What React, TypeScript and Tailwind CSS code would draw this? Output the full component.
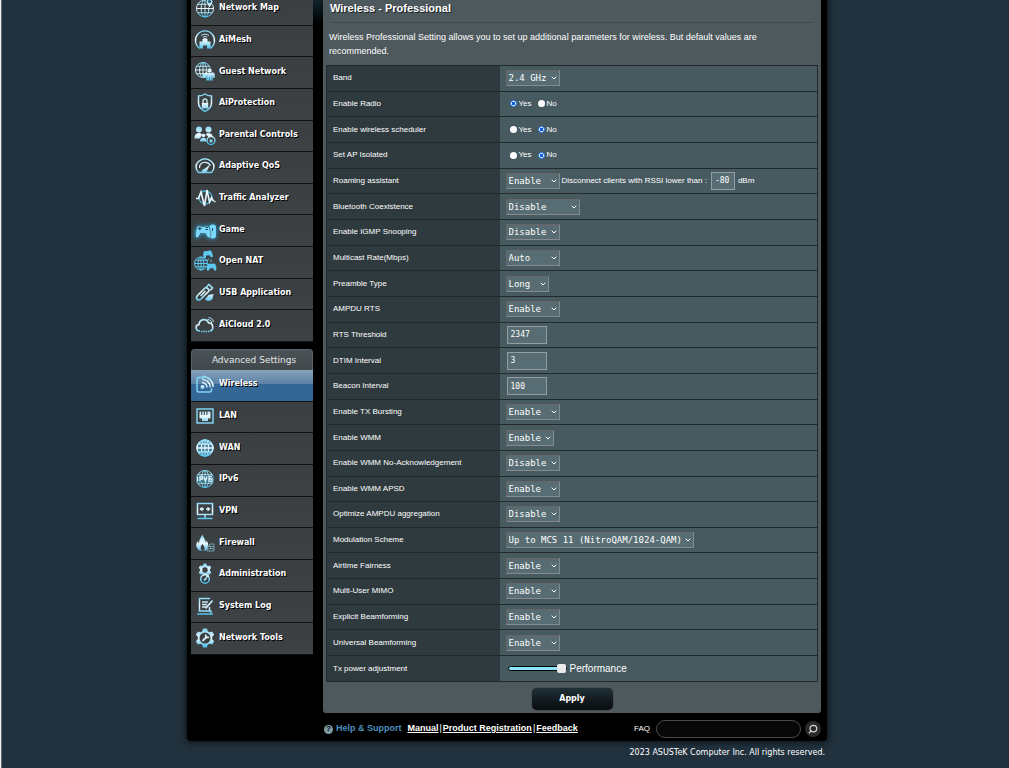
/**
 * WirelessProfessional
 * Router admin page: sidebar menus on the left, the wireless
 * professional settings form on the right, support links below.
 */

import type { ReactNode } from 'react';
import { ChevronDown, Search } from 'lucide-react';
import { clsx } from 'clsx';

type Field =
  | { kind: 'select'; label: string; value: string; width: string }
  | { kind: 'radio'; label: string; value: 'Yes' | 'No' }
  | { kind: 'text'; label: string; value: string }
  | { kind: 'roaming'; label: string }
  | { kind: 'power'; label: string };

const W = { xs: 'w-[43px]', sm: 'w-[48px]', md: 'w-[54px]', lg: 'w-[74px]', xl: 'w-[188px]' };

const fields: Field[] = [
  { kind: 'select', label: 'Band', value: '2.4 GHz', width: W.md },
  { kind: 'radio', label: 'Enable Radio', value: 'Yes' },
  { kind: 'radio', label: 'Enable wireless scheduler', value: 'No' },
  { kind: 'radio', label: 'Set AP Isolated', value: 'No' },
  { kind: 'roaming', label: 'Roaming assistant' },
  { kind: 'select', label: 'Bluetooth Coexistence', value: 'Disable', width: W.lg },
  { kind: 'select', label: 'Enable IGMP Snooping', value: 'Disable', width: W.md },
  { kind: 'select', label: 'Multicast Rate(Mbps)', value: 'Auto', width: W.md },
  { kind: 'select', label: 'Preamble Type', value: 'Long', width: W.xs },
  { kind: 'select', label: 'AMPDU RTS', value: 'Enable', width: W.md },
  { kind: 'text', label: 'RTS Threshold', value: '2347' },
  { kind: 'text', label: 'DTIM Interval', value: '3' },
  { kind: 'text', label: 'Beacon Interval', value: '100' },
  { kind: 'select', label: 'Enable TX Bursting', value: 'Enable', width: W.md },
  { kind: 'select', label: 'Enable WMM', value: 'Enable', width: W.sm },
  { kind: 'select', label: 'Enable WMM No-Acknowledgement', value: 'Disable', width: W.md },
  { kind: 'select', label: 'Enable WMM APSD', value: 'Enable', width: W.md },
  { kind: 'select', label: 'Optimize AMPDU aggregation', value: 'Disable', width: W.md },
  { kind: 'select', label: 'Modulation Scheme', value: 'Up to MCS 11 (NitroQAM/1024-QAM)', width: W.xl },
  { kind: 'select', label: 'Airtime Fairness', value: 'Enable', width: W.md },
  { kind: 'select', label: 'Multi-User MIMO', value: 'Enable', width: W.md },
  { kind: 'select', label: 'Explicit Beamforming', value: 'Enable', width: W.md },
  { kind: 'select', label: 'Universal Beamforming', value: 'Enable', width: W.md },
  { kind: 'power', label: 'Tx power adjustment' },
];

/* Icons, all on a 22 unit grid. "fill" shapes use the same gradient as the strokes. */
const F = 'url(#ice)';

function Globe({ x = 11, y = 11, r = 8 }: { x?: number; y?: number; r?: number }) {
  return (
    <g>
      <circle cx={x} cy={y} r={r} />
      <ellipse cx={x} cy={y} rx={r * 0.45} ry={r} />
      <path d={`M${x} ${y - r}v${r * 2}M${x - r} ${y}h${r * 2}M${x - r * 0.85} ${y - r * 0.5}h${r * 1.7}M${x - r * 0.85} ${y + r * 0.5}h${r * 1.7}`} />
    </g>
  );
}

const pad = 'M3 3.5C4 2 6 2 7 3h4c1-1 3-1 4 .5 1 2 2.500 7 1.500 9.500-.5 2-2.500 1.500-3.500 0L11.500 10h-5L5 13c-1 1.500-3 2-3.500 0C1 10.500 2 5.500 3 3.500z';
const gear = 'M9 1.500h4l.7 2.700 1.800 1 2.700-.8 2 3.400-2 2v2.400l2 2-2 3.400-2.700-.8-1.800 1-.7 2.700H9l-.7-2.700-1.800-1-2.700.8-2-3.400 2-2V9.800l-2-2 2-3.400 2.700.8 1.800-1z';

const icons: Record<string, ReactNode> = {
  map: (
    <>
      <Globe y={11.500} r={8.500} />
      <path d="M15.500 11c-2-3-3.500-4.500-3.500-6.500a3.500 3.500 0 0 1 7 0c0 2-1.500 3.500-3.500 6.500z" fill={F} stroke="#3b3f41" />
      <circle cx="15.500" cy="4.500" r="1.500" fill="#2b5566" stroke="none" />
    </>
  ),
  mesh: (
    <>
      <path d="M6 19.500a9.500 9.500 0 1 1 10 0" strokeWidth="1.400" />
      <path d="M5.500 19.500v-7h3V10l2.500-1 2.500 1v2.500h3v7h-3.500v-3h-4v3z" fill={F} stroke="none" />
      <path d="M7 6.500c2.500-1.800 5.500-1.800 8 0M8.800 8.300c1.400-1 3-1 4.400 0" />
    </>
  ),
  guest: (
    <>
      <Globe x={9} y={9} r={7.500} />
      <circle cx="15.500" cy="9.500" r="2.500" fill={F} stroke="#3b3f41" strokeWidth=".6" />
      <path d="M9 12.500h1.800l1.200-1.500 1.500 1h4l1.500-1 1 1.500h.7V17h-2v2.500h-6.500V17H9z" fill={F} stroke="none" />
      <path d="M12.800 14.500v4M15.500 16v3.500M18 14.500v4" stroke="#3b6576" strokeWidth=".6" />
    </>
  ),
  shield: (
    <>
      <path d="M11 2c2 1.400 4.500 2 6.500 2v7c0 4-2.500 6.500-6.500 8.500C7 17.500 4.500 15 4.500 11V4c2 0 4.500-.6 6.500-2z" strokeWidth="1.500" />
      <path d="M9 11V9a2 2 0 0 1 4 0v2" strokeWidth="1.300" />
      <path d="M7.800 11h6.400v5.500H7.800z" fill={F} stroke="none" />
    </>
  ),
  family: (
    <g fill={F} stroke="none">
      <circle cx="5" cy="5.500" r="3" />
      <circle cx="14.500" cy="5.500" r="3" />
      <path d="M.5 14.500c0-4 2-5.500 4.500-5.500 1.500 0 2.300.5 3 1.500L6 14.500zM11.500 10c1-.8 6-1.500 7 1.500l-3 2.500z" />
      <circle cx="9.500" cy="11.500" r="1.800" />
      <path d="M6 17.500c0-2.500 1.500-3.700 3.500-3.700s3 1.200 3 3.700z" />
      <circle cx="17" cy="16.500" r="4" fill="#3b3f41" stroke={F} strokeWidth="1.300" />
      <path d="M15.500 15.500h3v3h-3z" />
    </g>
  ),
  gauge: (
    <>
      <path d="M4.500 17.500C1 14 1.500 9 4.500 6.500c4-3.500 9-3.500 13 0 3 2.500 3.500 7.500 0 11z" strokeWidth="1.500" />
      <path d="M5.500 13c0-6.500 8-7.500 11-2.500" strokeWidth="1.200" />
      <path d="M7.500 17c0-2 2-3 3.500-3.500l5-4-2.500 5.500c-.5 1-1 2-1 2z" fill={F} stroke="none" />
    </>
  ),
  traffic: (
    <>
      <circle cx="11.500" cy="10.500" r="6.500" stroke="#4fb4dc" strokeWidth="1.300" />
      <path d="M2 11.500h2.500L7 5l3.500 14L13 3l2.500 12 2-4.500 1.500 3h1" stroke="#e9f8ff" strokeWidth="1.600" />
      <path d="M20 14.500h1.500" stroke="#e9f8ff" strokeWidth="1.500" />
    </>
  ),
  game: (
    <g className="drop-shadow-[0_0_2px_#1fa8e8]" fill="#7ad8fb" stroke="none">
      <rect x="15.500" y="5.500" width="6.500" height="14" rx="3" />
      <path d={pad} transform="translate(0 4.500)" stroke="#3b3f41" strokeWidth=".5" />
      <path d="M4 9.500h3.500M5.800 7.800v3.500M11.500 8.500h2.500M11.500 10.500h2.500M18.500 9v3" stroke="#1d4658" strokeWidth="1" />
    </g>
  ),
  nat: (
    <g stroke="#5cc8f0">
      <Globe x={7} y={13.500} r={6.500} />
      <g fill="#5cc8f0" stroke="none">
        <path d={pad} transform="translate(7.500 0) rotate(-8) scale(.62)" />
        <path d={pad} transform="translate(12 12) scale(.62)" />
      </g>
      <path d="M15 8.500l-2 2.500M17 9.500v2.500" />
    </g>
  ),
  usb: (
    <>
      <path d="M3.500 13.500l7.500-7.500c1.500-1.500 5 2 3.500 3.500L7 17c-3 2.500-6-.5-3.500-3.500z" strokeWidth="1.600" />
      <path d="M12.500 5l2.500-2.500L18.500 6 16 8.500M6.500 14l5-5" strokeWidth="1.600" />
      <path d="M11 17.500l3.500-4.500 5-1-1 5c-2 2.500-5.500 2.500-7.500.5z" fill={F} stroke="none" />
    </>
  ),
  cloud: (
    <>
      <path d="M6 17c-5 0-5-6-1-6.500C5.500 4.500 13 4 14.500 9c5-.5 6 8 1 8" strokeWidth="1.600" />
      <path d="M7 17.500h8" strokeDasharray="1.500 .8" strokeWidth="1.600" />
      <path d="M13.500 5.500c2.500 0 4 1.500 4.500 4M14.500 3.500c3 .3 4.500 2 5 4.500" />
    </>
  ),
  wireless: (
    <>
      <path d="M10 4.500H5a2 2 0 0 0-2 2v10.500a2 2 0 0 0 2 2h10.500a2 2 0 0 0 2-2v-2" stroke="#7fd4f3" strokeWidth="1.500" />
      <circle cx="8.500" cy="14" r="2" fill={F} stroke="none" />
      <path d="M8 9.500a5 5 0 0 1 5 5M8 6.300a8 8 0 0 1 8.200 8.200M8.500 3.300a11 11 0 0 1 10.700 10.700" strokeWidth="1.600" />
    </>
  ),
  lan: (
    <>
      <path d="M3 4h16v14H3z" stroke="#7fd4f3" strokeWidth="1.500" />
      <path d="M5.500 6.500h1.700V10h1V6.500h1.600V10h1V6.500h1.600V10h1V6.500H16.500V13.500H14v2.500H8v-2.500H5.500z" fill={F} stroke="none" />
    </>
  ),
  wan: (
    <g strokeWidth="1.300">
      <circle cx="11" cy="11" r="8" fill="#417b90" />
      <Globe />
    </g>
  ),
  ipv6: (
    <>
      <Globe r={8.500} />
      <path d="M2 7.500h18v7H2z" fill="#417b90" stroke="none" />
      <path d="M3.500 8.500v5M6 13.500v-5h2.500v2.500H6M10 8.500l1.500 5 1.500-5M18 8.500h-3v5h3V11h-3" strokeWidth="1.300" />
    </>
  ),
  vpn: (
    <>
      <path d="M3.500 3.500h15v11h-15z" strokeWidth="1.600" />
      <path d="M6 9h4M12 9h4" strokeWidth="1.300" />
      <path d="M8.500 6.500v5L5.500 9zM13.500 6.500v5l3-2.500z" fill={F} stroke="none" />
      <path d="M11 14.500V18M3.500 18.500h15" strokeWidth="1.600" />
    </>
  ),
  firewall: (
    <>
      <path d="M5.500 18.500C1 15.500 2 11 4 9c0 1.500.5 2 1 2.200C5 7.500 7 5 8.500 2.500c.5 3 3.500 5 3 8 .8-.3 1-1.500 1-2 3 4 2 8.500-1 10z" fill={F} stroke="none" />
      <path d="M8 18.500c-2.500-2-1-4.500.5-6.500 1.500 2 3 4 1.500 6.500z" fill="#3b3f41" stroke="none" />
      <path d="M13 14.500v4.500h7v-7h-4.500v2.500zM13 16.700h7M16.500 14.500v2M15.500 14.500H20" stroke="#7aa9b8" strokeWidth=".9" />
    </>
  ),
  admin: (
    <>
      <path d={gear} transform="translate(3.500 -.5) scale(.68)" fill={F} stroke="none" />
      <circle cx="11" cy="7" r="2.700" fill="#3b3f41" stroke="none" />
      <circle cx="11" cy="16" r="4.300" fill="#3b3f41" strokeWidth="1.400" />
      <path d="M10 17.500l2.500-2.500M14.500 11.500l-2 3" strokeWidth="1.800" />
    </>
  ),
  log: (
    <>
      <path d="M5.500 16V3.500H16M15.500 12v5" strokeWidth="1.500" />
      <path d="M4.500 16h12.500v3H4.500M3 19.200h16M8 7h6M8 9.500h5M8 12h4" strokeWidth="1.300" />
      <path d="M18.500 5.500l-7 8" strokeWidth="1.800" />
    </>
  ),
  tools: (
    <>
      <path d={gear} fill={F} stroke="none" />
      <circle cx="11" cy="11" r="5.500" fill="#3b3f41" stroke="none" />
      <path d="M8.500 14l3.500-3.500M12 7.500c-1 1.500 1 3.800 2.800 2.500" strokeWidth="1.800" />
    </>
  ),
};

function MenuItem({ icon, label, active }: { icon: string; label: string; active?: boolean }) {
  return (
    <li className="border-b border-[#101314]">
      <a
        href="#"
        className={clsx(
          'flex h-full items-center gap-[3px] pb-[2px] pl-[3px] text-[8px] font-bold text-white [text-shadow:1px_1px_0_#000]',
          active
            ? 'bg-linear-to-b from-[#86a2bb] from-0% via-[#5d82a6] via-45% to-[#346796] to-45%'
            : 'bg-linear-to-b from-[#3a3e40] to-[#3d4244]',
        )}
      >
        <svg viewBox="0 0 22 22" className="size-[22px] shrink-0 overflow-visible" fill="none" stroke={F} strokeWidth="1">
          {icons[icon]}
        </svg>
        {label}
      </a>
    </li>
  );
}

function Select({ id, value, width }: { id: string; value: string; width: string }) {
  return (
    <span className={clsx('relative inline-flex h-4', width)}>
      <select
        id={id}
        defaultValue={value}
        className="h-4 w-full appearance-none border border-t-[#666] border-r-[#858b8d] border-b-[#858b8d] border-l-[#666] bg-[#576d73] pl-[2px] font-['DejaVu_Sans_Mono',monospace] text-[9px] leading-[14px] text-white"
      >
        <option>{value}</option>
      </select>
      <ChevronDown className="pointer-events-none absolute top-1 right-[2px] size-2 text-white" strokeWidth={3} />
    </span>
  );
}

function TextBox({ id, value, className }: { id: string; value: string; className: string }) {
  return (
    <input
      id={id}
      type="text"
      defaultValue={value}
      className={clsx(
        "h-[18px] border border-[#929ea1] bg-[#576d73] px-[3px] font-['DejaVu_Sans_Mono',monospace] text-[8px] text-white",
        className,
      )}
    />
  );
}

function Control({ field, id }: { field: Field; id: string }) {
  switch (field.kind) {
    case 'select':
      return <Select id={id} value={field.value} width={field.width} />;
    case 'text':
      return <TextBox id={id} value={field.value} className="ml-px w-10" />;
    case 'radio':
      return (
        <span className="flex items-center gap-[6px] pl-1">
          {['Yes', 'No'].map((opt) => (
            <label key={opt} className="flex items-center gap-[2px]">
              <input
                type="radio"
                name={id}
                defaultChecked={opt === field.value}
                className="size-[7px] appearance-none rounded-full bg-white checked:border checked:border-[#0a5fe0] checked:bg-[radial-gradient(circle,#0a5fe0_40%,#fff_50%)]"
              />
              {opt}
            </label>
          ))}
        </span>
      );
    case 'roaming':
      return (
        <span className="flex items-center">
          <Select id={id} value="Enable" width={W.md} />
          <label htmlFor="rssi" className="pr-1 pl-[2px]">Disconnect clients with RSSI lower than :</label>
          <TextBox id="rssi" value="-80" className="w-6" />
          <span className="pl-[3px]">dBm</span>
        </span>
      );
    case 'power':
      return (
        <span className="flex items-center gap-[3px] pl-[2px] text-[10px]">
          <input
            id={id}
            type="range"
            defaultValue={100}
            className="h-[9px] w-[59px] appearance-none bg-transparent [&::-webkit-slider-runnable-track]:h-[5px] [&::-webkit-slider-runnable-track]:rounded-full [&::-webkit-slider-runnable-track]:border [&::-webkit-slider-runnable-track]:border-black [&::-webkit-slider-runnable-track]:bg-[#8ce3fc] [&::-webkit-slider-thumb]:-mt-[3px] [&::-webkit-slider-thumb]:size-[9px] [&::-webkit-slider-thumb]:appearance-none [&::-webkit-slider-thumb]:rounded-[2px] [&::-webkit-slider-thumb]:bg-[#eaeaea]"
          />
          Performance
        </span>
      );
  }
}

function Sidebar() {
  return (
    <nav className="w-[122px] shrink-0 font-['DejaVu_Sans',sans-serif]">
      <ul className="-mt-[6px] grid h-[348px] auto-rows-fr">
        <MenuItem icon="map" label="Network Map" />
        <MenuItem icon="mesh" label="AiMesh" />
        <MenuItem icon="guest" label="Guest Network" />
        <MenuItem icon="shield" label="AiProtection" />
        <MenuItem icon="family" label="Parental Controls" />
        <MenuItem icon="gauge" label="Adaptive QoS" />
        <MenuItem icon="traffic" label="Traffic Analyzer" />
        <MenuItem icon="game" label="Game" />
        <MenuItem icon="nat" label="Open NAT" />
        <MenuItem icon="usb" label="USB Application" />
        <MenuItem icon="cloud" label="AiCloud 2.0" />
      </ul>
      <h2 className="mt-[7px] h-[21px] rounded-t-[4px] border border-b-0 border-[#5c6669] bg-linear-to-b from-[#4a5356] to-[#42494c] pl-1 text-center text-[9px] leading-5 text-[#e4e8ea]">
        Advanced Settings
      </h2>
      <ul className="grid h-[285px] auto-rows-fr">
        <MenuItem icon="wireless" label="Wireless" active />
        <MenuItem icon="lan" label="LAN" />
        <MenuItem icon="wan" label="WAN" />
        <MenuItem icon="ipv6" label="IPv6" />
        <MenuItem icon="vpn" label="VPN" />
        <MenuItem icon="firewall" label="Firewall" />
        <MenuItem icon="admin" label="Administration" />
        <MenuItem icon="log" label="System Log" />
        <MenuItem icon="tools" label="Network Tools" />
      </ul>
    </nav>
  );
}

export default function App() {
  return (
    <div className="min-h-screen overflow-hidden border-l border-[#f0f0f0] bg-[#21323e] font-['Liberation_Sans',sans-serif] text-white">
      <svg className="absolute size-0">
        <linearGradient id="ice" gradientUnits="userSpaceOnUse" x1="0" y1="2" x2="0" y2="20">
          <stop offset="0" stopColor="#7fd4f3" />
          <stop offset=".5" stopColor="#eefaff" />
          <stop offset="1" stopColor="#45bde9" />
        </linearGradient>
      </svg>

      <div className="min-h-screen border-l border-[#5f6c75] pl-[3px]">
        <div className="mx-auto w-full max-w-[640px]">
          <div className="rounded-b-[4px] bg-black bg-[radial-gradient(circle_at_130px_0,#10262d,#000_24px)] shadow-[0_0_6px_2px_#0d161c]">
            <div className="flex gap-[10px] pr-[6px] pl-1">
              <Sidebar />

              <main className="min-w-0 flex-1 rounded-b-[3px] bg-[#4d595d] px-[3px] pb-[3px]">
                <h1 className="mx-1 border-b border-[#3f4a4d] pb-[6px] text-[11px] leading-4 font-bold [text-shadow:1px_1px_0_#1c2224]">
                  Wireless - Professional
                </h1>
                <p className="mt-[7px] px-[3px] text-[9px] leading-[14px]">
                  Wireless Professional Setting allows you to set up additional parameters for wireless. But default values are
                  recommended.
                </p>

                <table className="mt-[7px] h-[617px] w-full border-collapse text-[8px]">
                  <tbody>
                    {fields.map((field, i) => (
                      <tr key={field.label}>
                        <th scope="row" className="w-[173px] border border-r-0 border-[#222a2c] bg-[#2f3a3e] p-0 pl-[6px] text-left font-normal">
                          {field.kind === 'radio' ? field.label : <label htmlFor={`f${i}`}>{field.label}</label>}
                        </th>
                        <td className="border border-l-0 border-[#222a2c] bg-[#475a5f] p-0 pl-[6px]">
                          <div className="flex h-6 items-center">
                            <Control field={field} id={`f${i}`} />
                          </div>
                        </td>
                      </tr>
                    ))}
                  </tbody>
                </table>

                <div className="flex justify-center pt-[6px]">
                  <button
                    type="button"
                    className="h-[22px] w-[81px] rounded-[5px] bg-linear-to-b from-[#1f3036] to-[#0a0c0d] font-['DejaVu_Sans',sans-serif] text-[8px] font-bold shadow-[0_0_1px_#000]"
                  >
                    Apply
                  </button>
                </div>
              </main>
            </div>

            <footer className="flex h-7 items-center pt-1 pr-[6px] pl-[137px] text-[9px] font-bold">
              <span className="flex size-[9px] items-center justify-center rounded-full bg-[#7f9aa6] text-[8px] text-black">?</span>
              <span className="pl-[3px] text-[#4d8fbd]">Help &amp; Support</span>
              <span className="flex gap-px pl-[6px]">
                <a href="#" className="underline">Manual</a>
                <span className="font-normal">|</span>
                <a href="#" className="underline">Product Registration</a>
                <span className="font-normal">|</span>
                <a href="#" className="underline">Feedback</a>
              </span>
              <label htmlFor="faq" className="ml-auto text-[8px] font-normal">FAQ</label>
              <input id="faq" type="search" className="ml-[6px] h-[18px] w-[145px] rounded-full border border-[#4a4a4a] bg-[#080808] px-2" />
              <button type="button" aria-label="Search FAQ" className="ml-1 flex size-4 items-center justify-center rounded-full bg-[#2a2a2a] text-[#d0d0d0]">
                <Search className="size-[10px] -scale-x-100" strokeWidth={3} />
              </button>
            </footer>
          </div>

          <p className="pt-[6px] pr-[2px] text-right font-['DejaVu_Sans',sans-serif] text-[8px] leading-3">
            2023 ASUSTeK Computer Inc. All rights reserved.
          </p>
        </div>
      </div>
    </div>
  );
}
